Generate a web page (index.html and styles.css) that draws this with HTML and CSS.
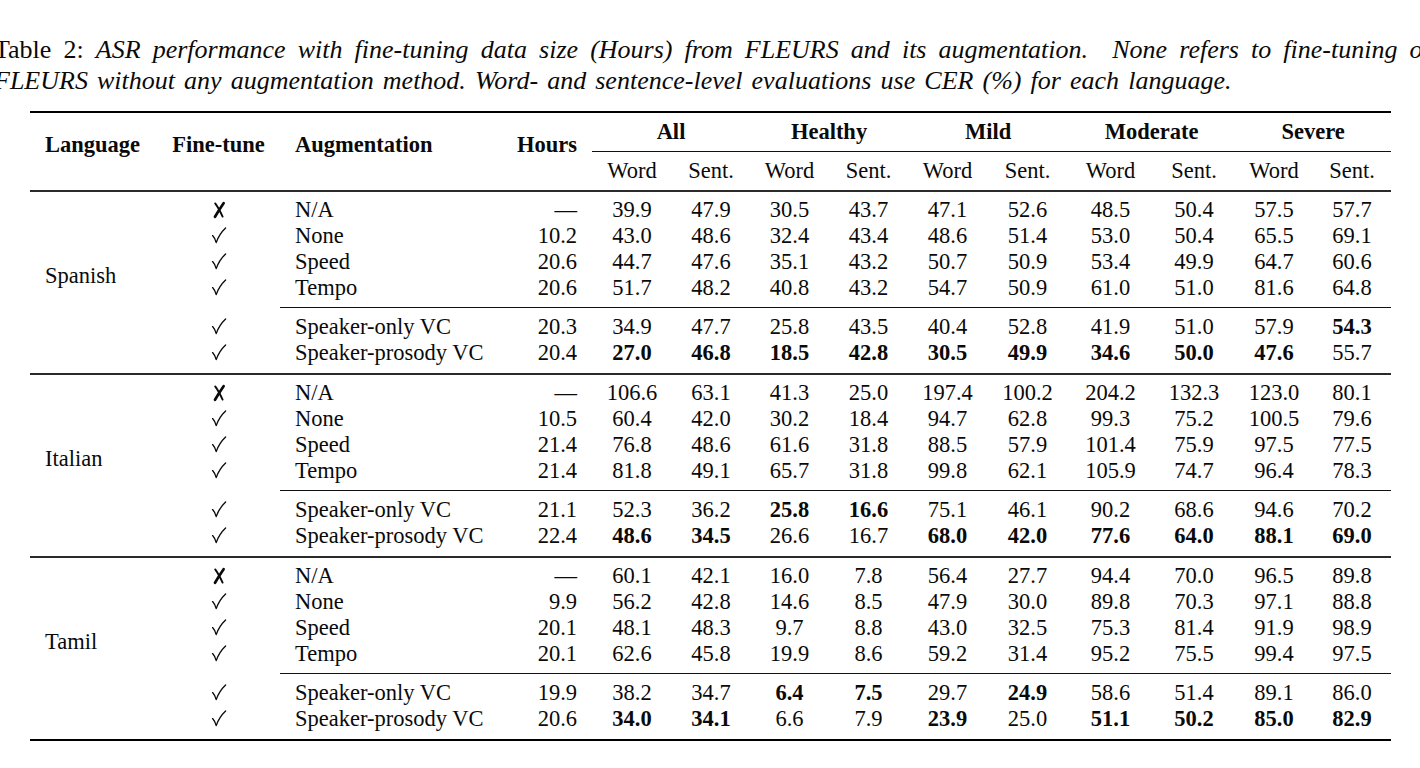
FILE: index.html
```html
<!DOCTYPE html>
<html lang="en">
<head>
<meta charset="utf-8">
<title>Table 2</title>
<link rel="stylesheet" href="styles.css">
</head>
<body>
<svg class="defs" width="0" height="0" aria-hidden="true">
  <defs>
    <symbol id="ck" viewBox="0 0 16 26">
      <path d="M1.6 12.6 Q3.6 14.6 5.2 19.6 Q8.2 11 14.6 5" fill="none" stroke="#0a0a0a" stroke-width="1.35" stroke-linecap="round" stroke-linejoin="round"/>
    </symbol>
    <symbol id="xx" viewBox="0 0 16 26">
      <path d="M12.6 6.2 Q8.4 12.2 4 19.8" fill="none" stroke="#0a0a0a" stroke-width="2.7" stroke-linecap="round"/>
      <path d="M4.2 6.4 Q7.6 11 11.6 19.6" fill="none" stroke="#0a0a0a" stroke-width="1.9" stroke-linecap="round"/>
    </symbol>
  </defs>
</svg>
<div class="page">
  <div class="caption">
    <div class="cap-line cap-first"><span class="up">Table 2:</span> <em>ASR performance with fine-tuning data size (Hours) from FLEURS and its augmentation. &nbsp;None refers to fine-tuning on</em></div>
    <div class="cap-line cap-second"><em>FLEURS without any augmentation method. Word- and sentence-level evaluations use CER (%) for each language.</em></div>
  </div>

  <table class="results">
    <colgroup>
      <col class="w-lang"><col class="w-ft"><col class="w-aug"><col class="w-hrs">
      <col class="w80"><col class="w78"><col class="w79"><col class="w79"><col class="w79"><col class="w81"><col class="w85"><col class="w82"><col class="w78"><col class="w78">
    </colgroup>
    <thead>
      <tr class="h1">
        <th rowspan="2" class="lang">Language</th>
        <th rowspan="2" class="ft">Fine-tune</th>
        <th rowspan="2" class="aug">Augmentation</th>
        <th rowspan="2" class="hrs">Hours</th>
        <th colspan="2" class="gcell"><div class="grp">All</div></th>
        <th colspan="2" class="gcell"><div class="grp">Healthy</div></th>
        <th colspan="2" class="gcell"><div class="grp">Mild</div></th>
        <th colspan="2" class="gcell"><div class="grp">Moderate</div></th>
        <th colspan="2" class="gcell"><div class="grp">Severe</div></th>
      </tr>
      <tr class="h2">
        <th>Word</th><th>Sent.</th><th>Word</th><th>Sent.</th><th>Word</th><th>Sent.</th><th>Word</th><th>Sent.</th><th>Word</th><th>Sent.</th>
      </tr>
    </thead>

    <tbody>
      <tr class="first">
        <td rowspan="6" class="lang">Spanish</td>
        <td class="ft"><svg class="ico" aria-label="no"><use href="#xx"/></svg></td><td class="aug">N/A</td><td class="hrs">—</td>
        <td>39.9</td><td>47.9</td><td>30.5</td><td>43.7</td><td>47.1</td><td>52.6</td><td>48.5</td><td>50.4</td><td>57.5</td><td>57.7</td>
      </tr>
      <tr>
        <td class="ft"><svg class="ico" aria-label="yes"><use href="#ck"/></svg></td><td class="aug">None</td><td class="hrs">10.2</td>
        <td>43.0</td><td>48.6</td><td>32.4</td><td>43.4</td><td>48.6</td><td>51.4</td><td>53.0</td><td>50.4</td><td>65.5</td><td>69.1</td>
      </tr>
      <tr>
        <td class="ft"><svg class="ico" aria-label="yes"><use href="#ck"/></svg></td><td class="aug">Speed</td><td class="hrs">20.6</td>
        <td>44.7</td><td>47.6</td><td>35.1</td><td>43.2</td><td>50.7</td><td>50.9</td><td>53.4</td><td>49.9</td><td>64.7</td><td>60.6</td>
      </tr>
      <tr class="pre">
        <td class="ft"><svg class="ico" aria-label="yes"><use href="#ck"/></svg></td><td class="aug">Tempo</td><td class="hrs">20.6</td>
        <td>51.7</td><td>48.2</td><td>40.8</td><td>43.2</td><td>54.7</td><td>50.9</td><td>61.0</td><td>51.0</td><td>81.6</td><td>64.8</td>
      </tr>
      <tr class="post">
        <td class="ft"><svg class="ico" aria-label="yes"><use href="#ck"/></svg></td><td class="aug">Speaker-only VC</td><td class="hrs">20.3</td>
        <td>34.9</td><td>47.7</td><td>25.8</td><td>43.5</td><td>40.4</td><td>52.8</td><td>41.9</td><td>51.0</td><td>57.9</td><td class="b">54.3</td>
      </tr>
      <tr class="last">
        <td class="ft"><svg class="ico" aria-label="yes"><use href="#ck"/></svg></td><td class="aug">Speaker-prosody VC</td><td class="hrs">20.4</td>
        <td class="b">27.0</td><td class="b">46.8</td><td class="b">18.5</td><td class="b">42.8</td><td class="b">30.5</td><td class="b">49.9</td><td class="b">34.6</td><td class="b">50.0</td><td class="b">47.6</td><td>55.7</td>
      </tr>
    </tbody>

    <tbody>
      <tr class="first">
        <td rowspan="6" class="lang">Italian</td>
        <td class="ft"><svg class="ico" aria-label="no"><use href="#xx"/></svg></td><td class="aug">N/A</td><td class="hrs">—</td>
        <td>106.6</td><td>63.1</td><td>41.3</td><td>25.0</td><td>197.4</td><td>100.2</td><td>204.2</td><td>132.3</td><td>123.0</td><td>80.1</td>
      </tr>
      <tr>
        <td class="ft"><svg class="ico" aria-label="yes"><use href="#ck"/></svg></td><td class="aug">None</td><td class="hrs">10.5</td>
        <td>60.4</td><td>42.0</td><td>30.2</td><td>18.4</td><td>94.7</td><td>62.8</td><td>99.3</td><td>75.2</td><td>100.5</td><td>79.6</td>
      </tr>
      <tr>
        <td class="ft"><svg class="ico" aria-label="yes"><use href="#ck"/></svg></td><td class="aug">Speed</td><td class="hrs">21.4</td>
        <td>76.8</td><td>48.6</td><td>61.6</td><td>31.8</td><td>88.5</td><td>57.9</td><td>101.4</td><td>75.9</td><td>97.5</td><td>77.5</td>
      </tr>
      <tr class="pre">
        <td class="ft"><svg class="ico" aria-label="yes"><use href="#ck"/></svg></td><td class="aug">Tempo</td><td class="hrs">21.4</td>
        <td>81.8</td><td>49.1</td><td>65.7</td><td>31.8</td><td>99.8</td><td>62.1</td><td>105.9</td><td>74.7</td><td>96.4</td><td>78.3</td>
      </tr>
      <tr class="post">
        <td class="ft"><svg class="ico" aria-label="yes"><use href="#ck"/></svg></td><td class="aug">Speaker-only VC</td><td class="hrs">21.1</td>
        <td>52.3</td><td>36.2</td><td class="b">25.8</td><td class="b">16.6</td><td>75.1</td><td>46.1</td><td>90.2</td><td>68.6</td><td>94.6</td><td>70.2</td>
      </tr>
      <tr class="last">
        <td class="ft"><svg class="ico" aria-label="yes"><use href="#ck"/></svg></td><td class="aug">Speaker-prosody VC</td><td class="hrs">22.4</td>
        <td class="b">48.6</td><td class="b">34.5</td><td>26.6</td><td>16.7</td><td class="b">68.0</td><td class="b">42.0</td><td class="b">77.6</td><td class="b">64.0</td><td class="b">88.1</td><td class="b">69.0</td>
      </tr>
    </tbody>

    <tbody>
      <tr class="first">
        <td rowspan="6" class="lang">Tamil</td>
        <td class="ft"><svg class="ico" aria-label="no"><use href="#xx"/></svg></td><td class="aug">N/A</td><td class="hrs">—</td>
        <td>60.1</td><td>42.1</td><td>16.0</td><td>7.8</td><td>56.4</td><td>27.7</td><td>94.4</td><td>70.0</td><td>96.5</td><td>89.8</td>
      </tr>
      <tr>
        <td class="ft"><svg class="ico" aria-label="yes"><use href="#ck"/></svg></td><td class="aug">None</td><td class="hrs">9.9</td>
        <td>56.2</td><td>42.8</td><td>14.6</td><td>8.5</td><td>47.9</td><td>30.0</td><td>89.8</td><td>70.3</td><td>97.1</td><td>88.8</td>
      </tr>
      <tr>
        <td class="ft"><svg class="ico" aria-label="yes"><use href="#ck"/></svg></td><td class="aug">Speed</td><td class="hrs">20.1</td>
        <td>48.1</td><td>48.3</td><td>9.7</td><td>8.8</td><td>43.0</td><td>32.5</td><td>75.3</td><td>81.4</td><td>91.9</td><td>98.9</td>
      </tr>
      <tr class="pre">
        <td class="ft"><svg class="ico" aria-label="yes"><use href="#ck"/></svg></td><td class="aug">Tempo</td><td class="hrs">20.1</td>
        <td>62.6</td><td>45.8</td><td>19.9</td><td>8.6</td><td>59.2</td><td>31.4</td><td>95.2</td><td>75.5</td><td>99.4</td><td>97.5</td>
      </tr>
      <tr class="post">
        <td class="ft"><svg class="ico" aria-label="yes"><use href="#ck"/></svg></td><td class="aug">Speaker-only VC</td><td class="hrs">19.9</td>
        <td>38.2</td><td>34.7</td><td class="b">6.4</td><td class="b">7.5</td><td>29.7</td><td class="b">24.9</td><td>58.6</td><td>51.4</td><td>89.1</td><td>86.0</td>
      </tr>
      <tr class="last">
        <td class="ft"><svg class="ico" aria-label="yes"><use href="#ck"/></svg></td><td class="aug">Speaker-prosody VC</td><td class="hrs">20.6</td>
        <td class="b">34.0</td><td class="b">34.1</td><td>6.6</td><td>7.9</td><td class="b">23.9</td><td>25.0</td><td class="b">51.1</td><td class="b">50.2</td><td class="b">85.0</td><td class="b">82.9</td>
      </tr>
    </tbody>
  </table>
</div>
</body>
</html>
```

FILE: styles.css
```css
html, body {
  margin: 0;
  padding: 0;
  background: #ffffff;
}

body {
  width: 1420px;
  height: 768px;
  overflow: hidden;
  color: #0a0a0a;
  font-family: "Liberation Serif", "Times New Roman", serif;
}

.defs {
  position: absolute;
  width: 0;
  height: 0;
  overflow: hidden;
}

.page {
  padding-top: 34px;
}

.caption {
  margin-left: -6px;
  font-size: 26px;
  line-height: 31px;
}

.cap-line {
  white-space: nowrap;
}

.cap-first {
  word-spacing: 5.6px;
}

.cap-second {
  word-spacing: 2.6px;
}

.caption em {
  font-style: italic;
}

.up {
  font-style: normal;
}

.results {
  margin-top: 15px;
  margin-left: 30px;
  width: 1361px;
  table-layout: fixed;
  border-collapse: separate;
  border-spacing: 0;
  border-top: 2px solid #000;
  border-bottom: 2px solid #000;
  font-size: 22.5px;
  line-height: 26px;
}

.w-lang { width: 127px; }
.w-ft { width: 123px; }
.w-aug { width: 220px; }
.w-hrs { width: 92px; }
.w78 { width: 78px; }
.w79 { width: 79px; }
.w80 { width: 80px; }
.w81 { width: 81px; }
.w82 { width: 82px; }
.w85 { width: 85px; }

.results th,
.results td {
  padding: 0;
  text-align: center;
  white-space: nowrap;
  vertical-align: top;
}

.results th {
  font-weight: bold;
}

/* header */
.h1 th[rowspan] {
  vertical-align: middle;
  padding-bottom: 13px;
  border-bottom: 2px solid #2a2a2a;
}

.gcell {
  padding: 0 13px;
}

.grp {
  padding: 6px 0;
  border-bottom: 1px solid #111;
}

.h2 th {
  font-weight: normal;
  padding: 6px 0;
  border-bottom: 2px solid #2a2a2a;
}

/* alignment of the text columns */
.results .lang {
  text-align: left;
  padding-left: 15px;
}

.results .aug {
  text-align: left;
  padding-left: 15px;
}

.results .hrs {
  text-align: right;
  padding-right: 15px;
}

.results td.lang {
  vertical-align: middle;
  padding-bottom: 14px;
}

/* fine-tune marks */
.ico {
  display: block;
  width: 16px;
  height: 26px;
  margin: 0 auto;
}

/* data rows */
tr.first td {
  padding-top: 5px;
}

tr.first td.lang {
  padding-top: 0;
}

tbody + tbody tr.first td {
  border-top: 2px solid #2a2a2a;
}

tr.pre td {
  padding-bottom: 6px;
}

tr.post td {
  padding-top: 6px;
  border-top: 1px solid #111;
}

tr.post td.ft {
  border-top-color: transparent;
}

tr.last td {
  padding-bottom: 7px;
}

.b {
  font-weight: bold;
}
```
